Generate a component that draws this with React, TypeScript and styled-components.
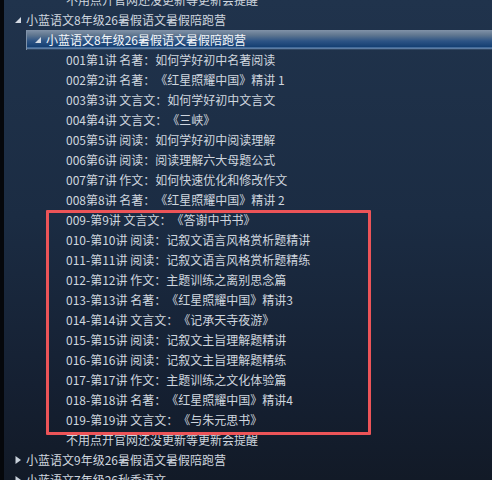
import React from "react";
import styled, { createGlobalStyle } from "styled-components";

const Global = createGlobalStyle`
  html, body { margin: 0; padding: 0; background: #000; }
  body { width: 492px; height: 480px; overflow: hidden; }
  #root { height: 480px; }
`;

const Window = styled.div`
  display: flex;
  width: 492px;
  height: 480px;
  overflow: hidden;
  background: #000;
`;

const Edge = styled.div`
  width: 4px;
  flex: none;
  background: #05070b;
`;

const Panel = styled.div`
  flex: 1;
  overflow: hidden;
  background: linear-gradient(180deg, #20334c 0%, #1b2c43 45%, #152032 80%, #121a27 100%);
  font-family: "Noto Sans CJK SC", "Noto Sans", sans-serif;
  font-size: 12px;
  color: #cfd6df;
  text-spacing-trim: space-all;
`;

const List = styled.div`
  display: flex;
  flex-direction: column;
  margin-top: -10px;
`;

const Row = styled.div<{ $level: number; $selected?: boolean }>`
  display: flex;
  align-items: center;
  height: 20px;
  margin-left: ${(p) => 2 + p.$level * 20}px;
  padding-left: 4px;
  white-space: nowrap;
  color: ${(p) => (p.$selected ? "#f4f7fa" : "#cfd6df")};
  background: ${(p) =>
    p.$selected
      ? "linear-gradient(180deg, #8192a8 0%, #607790 25%, #2d5485 55%, #143f72 85%, #7296c1 90%, #1a2c44 100%)"
      : "transparent"};
  box-shadow: ${(p) => (p.$selected ? "inset 1px 0 0 #8093aa" : "none")};
`;

const Expander = styled.span`
  width: 16px;
  height: 20px;
  flex: none;
  display: flex;
  align-items: center;
  justify-content: center;
`;

const Label = styled.span`
  line-height: 20px;
`;

const Group = styled.div`
  position: relative;
  display: flex;
  flex-direction: column;
  &::after {
    content: "";
    position: absolute;
    left: 42px;
    top: 0;
    width: 325px;
    height: 225px;
    box-sizing: border-box;
    border: 3px solid #ec5458;
    border-radius: 1px;
    pointer-events: none;
  }
`;

const Expanded = () => (
  <svg width="8" height="8" viewBox="0 0 8 8">
    <polygon points="7,1 7,7 1,7" fill="#d3dae3" />
  </svg>
);

const Collapsed = () => (
  <svg width="8" height="10" viewBox="0 0 8 10">
    <polygon points="1.5,1 7,5 1.5,9" fill="#c9d1db" />
  </svg>
);

type Item = { level: number; text: string; state?: "open" | "closed"; selected?: boolean };

const Node = ({ item }: { item: Item }) => (
  <Row $level={item.level} $selected={item.selected}>
    <Expander>
      {item.state === "open" ? <Expanded /> : item.state === "closed" ? <Collapsed /> : null}
    </Expander>
    <Label>{item.text}</Label>
  </Row>
);

const head: Item[] = [
  { level: 2, text: "不用点开官网还没更新等更新会提醒" },
  { level: 0, text: "小蓝语文8年级26暑假语文暑假陪跑营", state: "open" },
  { level: 1, text: "小蓝语文8年级26暑假语文暑假陪跑营", state: "open", selected: true },
  { level: 2, text: "001第1讲 名著：如何学好初中名著阅读" },
  { level: 2, text: "002第2讲 名著：《红星照耀中国》精讲 1" },
  { level: 2, text: "003第3讲 文言文：如何学好初中文言文" },
  { level: 2, text: "004第4讲 文言文：《三峡》" },
  { level: 2, text: "005第5讲 阅读：如何学好初中阅读理解" },
  { level: 2, text: "006第6讲 阅读：阅读理解六大母题公式" },
  { level: 2, text: "007第7讲 作文：如何快速优化和修改作文" },
  { level: 2, text: "008第8讲 名著：《红星照耀中国》精讲 2" },
];

const marked: Item[] = [
  "009-第9讲 文言文：《答谢中书书》",
  "010-第10讲 阅读：记叙文语言风格赏析题精讲",
  "011-第11讲 阅读：记叙文语言风格赏析题精练",
  "012-第12讲 作文：主题训练之离别思念篇",
  "013-第13讲 名著：《红星照耀中国》精讲3",
  "014-第14讲 文言文：《记承天寺夜游》",
  "015-第15讲 阅读：记叙文主旨理解题精讲",
  "016-第16讲 阅读：记叙文主旨理解题精练",
  "017-第17讲 作文：主题训练之文化体验篇",
  "018-第18讲 名著：《红星照耀中国》精讲4",
  "019-第19讲 文言文：《与朱元思书》",
].map((text) => ({ level: 2, text }));

const tail: Item[] = [
  { level: 2, text: "不用点开官网还没更新等更新会提醒" },
  { level: 0, text: "小蓝语文9年级26暑假语文暑假陪跑营", state: "closed" },
  { level: 0, text: "小蓝语文7年级26秋季语文", state: "closed" },
];

export default function App() {
  return (
    <>
      <Global />
      <Window>
        <Edge />
        <Panel>
          <List>
            {head.map((it, i) => (
              <Node key={"h" + i} item={it} />
            ))}
            <Group>
              {marked.map((it, i) => (
                <Node key={"m" + i} item={it} />
              ))}
            </Group>
            {tail.map((it, i) => (
              <Node key={"t" + i} item={it} />
            ))}
          </List>
        </Panel>
      </Window>
    </>
  );
}
